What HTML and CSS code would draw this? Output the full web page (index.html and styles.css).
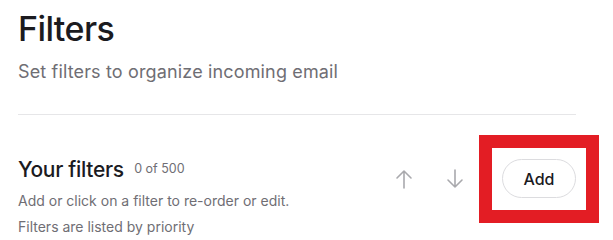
FILE: index.html
```html
<!DOCTYPE html>
<html lang="en">
<head>
    <meta charset="UTF-8" />
    <title>Filters</title>
    <link rel="stylesheet" href="styles.css">
</head>
<body>
    <div class="page">
        <header class="page-head">
            <h1>Filters</h1>
            <p class="subtitle">Set filters to organize incoming email</p>
        </header>

        <section class="filters">
            <div class="filters-info">
                <h2>Your filters <span class="count">0 of 500</span></h2>
                <p>Add or click on a filter to re-order or edit.</p>
                <p>Filters are listed by priority</p>
            </div>
            <div class="filters-actions">
                <button class="icon-btn" title="Move up">
                    <svg width="18" height="20" viewBox="0 0 18 20" fill="none" stroke="currentColor" stroke-width="1.6" stroke-linecap="round" stroke-linejoin="round">
                        <path d="M9 19V2M2 9l7-7 7 7"/>
                    </svg>
                </button>
                <button class="icon-btn" title="Move down">
                    <svg width="18" height="20" viewBox="0 0 18 20" fill="none" stroke="currentColor" stroke-width="1.6" stroke-linecap="round" stroke-linejoin="round">
                        <path d="M9 1v17M2 11l7 7 7-7"/>
                    </svg>
                </button>
                <!-- roter Rahmen = Markierung im Screenshot -->
                <span class="highlight">
                    <button class="add-btn">Add</button>
                </span>
            </div>
        </section>
    </div>
</body>
</html>
```

FILE: styles.css
```css
:root {
    --text: #1b1b1f;
    --text-muted: #6f6e74;
    --line: #e6e6e8;
    --arrow: #a9a9ad;
    --highlight: #e31d24;
}

body {
    margin: 0;
    background: #ffffff;
    color: var(--text);
    font-family: Inter, "Noto Sans", sans-serif;
}

.page {
    padding: 0 37px 0 18px;
}

.page-head {
    padding-top: 9px;
    padding-bottom: 30px;
    border-bottom: 1px solid var(--line);
}

h1 {
    margin: 0;
    font-size: 34px;
    font-weight: 500;
    line-height: 40px;
    letter-spacing: -0.6px;
}

.subtitle {
    margin: 11px 0 0 0;
    font-size: 18px;
    line-height: 24px;
    letter-spacing: 0.15px;
    color: var(--text-muted);
}

.filters {
    display: flex;
    align-items: flex-start;
    justify-content: space-between;
    padding-top: 40px;
}

.filters h2 {
    margin: 0;
    font-size: 21px;
    font-weight: 500;
    line-height: 28px;
    letter-spacing: -0.3px;
}

.count {
    margin-left: 5px;
    font-size: 12.5px;
    font-weight: 400;
    letter-spacing: 0;
    color: var(--text-muted);
    vertical-align: 4px;
}

.filters-info h2 + p {
    margin-top: 4px;
}

.filters-info p {
    margin: 0;
    font-size: 14px;
    line-height: 26px;
    color: var(--text-muted);
}

.filters-actions {
    display: flex;
    align-items: center;
    margin-top: 4px;
}

.icon-btn {
    background: none;
    border: none;
    padding: 0;
    width: 18px;
    height: 20px;
    color: var(--arrow);
    margin-right: 33px;
    cursor: pointer;
}

.icon-btn svg {
    display: block;
}

.highlight {
    position: relative;
    display: flex;
    margin-left: 5px;
}

.highlight::after {
    content: "";
    position: absolute;
    top: -24px;
    bottom: -25px;
    left: -23px;
    right: -23px;
    border: 13px solid var(--highlight);
    pointer-events: none;
}

.add-btn {
    width: 74px;
    height: 39px;
    border: 1px solid #dcdcdf;
    border-radius: 20px;
    background: #ffffff;
    font-family: inherit;
    font-size: 16px;
    font-weight: 500;
    color: var(--text);
    cursor: pointer;
}
```
